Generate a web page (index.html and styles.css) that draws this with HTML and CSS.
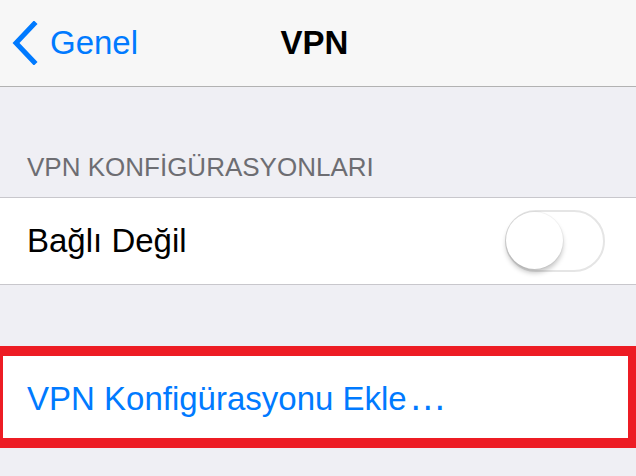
FILE: index.html
```html
<!doctype html>
<html lang="tr">
  <head>
    <meta charset="UTF-8" />
    <meta name="viewport" content="width=device-width, initial-scale=1.0" />
    <title>VPN</title>
    <link rel="stylesheet" href="styles.css">
  </head>
  <body>
    <div class="nav-bar">
      <a class="nav-back" href="#">
        <svg class="chevron" viewBox="0 0 26 44" width="26" height="44">
          <polyline points="22,3 4,22 22,41" />
        </svg>
        <span>Genel</span>
      </a>
      <div class="nav-title">VPN</div>
      <div></div>
    </div>

    <div class="section-header">VPN KONFİGÜRASYONLARI</div>
    <div class="group">
      <div class="cell">
        <span class="cell-label">Bağlı Değil</span>
        <div class="switch">
          <div class="switch-knob"></div>
        </div>
      </div>
    </div>

    <div class="group highlighted">
      <div class="cell cell-action">
        <span class="cell-link">VPN Konfigürasyonu Ekle<span class="ellipsis">…</span></span>
      </div>
    </div>
  </body>
</html>
```

FILE: styles.css
```css
body {
  margin: 0;
  width: 636px;
  height: 476px;
  overflow: hidden;
  background-color: #efeff4;
  font-family: "Liberation Sans", Arial, sans-serif;
}

.nav-bar {
  display: grid;
  grid-template-columns: 1fr auto 1fr;
  align-items: center;
  height: 86px;
  background-color: #f7f7f7;
  border-bottom: 1px solid #b2b2b2;
}

.nav-back {
  display: flex;
  align-items: center;
  gap: 12px;
  padding-left: 12px;
  color: #007aff;
  font-size: 33px;
  text-decoration: none;
}

.chevron {
  display: block;
}

.chevron polyline {
  fill: none;
  stroke: #007aff;
  stroke-width: 5;
  stroke-linecap: square;
}

.nav-title {
  font-size: 33px;
  font-weight: bold;
  color: #000;
  margin-right: 7px;
}

.section-header {
  margin-top: 65px;
  padding: 0 0 15px 27px;
  line-height: 30px;
  font-size: 26px;
  color: #6d6d72;
}

.group {
  background-color: #fff;
  border-top: 1px solid #c8c7cc;
  border-bottom: 1px solid #c8c7cc;
}

.cell {
  display: flex;
  align-items: center;
  justify-content: space-between;
  height: 86px;
  padding: 0 31px 0 27px;
}

.cell-label {
  font-size: 33px;
  color: #000;
}

.switch {
  position: relative;
  box-sizing: border-box;
  width: 100px;
  height: 62px;
  border: 2px solid #e5e5e5;
  border-radius: 31px;
  background-color: #fff;
}

.switch-knob {
  position: absolute;
  top: 0;
  left: -1px;
  width: 57px;
  height: 57px;
  border-radius: 50%;
  background-color: #fff;
  box-shadow: 0 0 0 1px rgba(0, 0, 0, 0.04), 0 4px 5px rgba(0, 0, 0, 0.22);
}

.highlighted {
  margin-top: 61px;
  border-style: solid;
  border-color: #ed1c24;
  border-width: 10px 8px 10px 3px;
}

.cell-action {
  height: 82px;
  padding-left: 24px;
}

.cell-link {
  font-size: 33px;
  color: #007aff;
}

.ellipsis {
  display: inline-block;
  font-size: 38px;
  margin-left: 2px;
}
```
